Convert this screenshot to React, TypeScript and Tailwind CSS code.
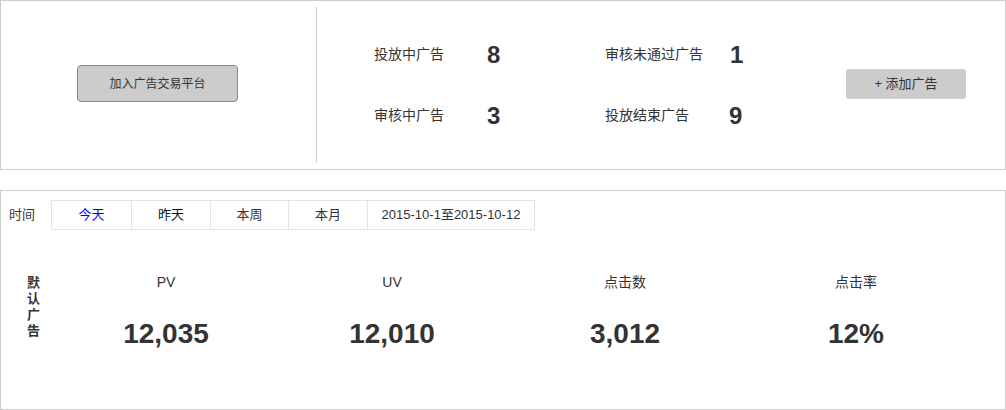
export default function App() {
  const stats = [
    { label: 'PV', value: '12,035', w: 'w-[226px]' },
    { label: 'UV', value: '12,010', w: 'w-[226px]' },
    { label: '点击数', value: '3,012', w: 'w-[240px]' },
    { label: '点击率', value: '12%', w: 'w-[222px]' },
  ];
  const tabs = [
    { t: '今天', w: 'w-[79px]', c: 'text-[#0000ff]' },
    { t: '昨天', w: 'w-[79px]', c: 'text-[#111]' },
    { t: '本周', w: 'w-[78px]', c: 'text-[#333]' },
    { t: '本月', w: 'w-[79px]', c: 'text-[#333]' },
    { t: '2015-10-1至2015-10-12', w: 'w-[167px]', c: 'text-[#333]' },
  ];

  return (
    <div className="w-[1006px] bg-white text-[#333] font-['Liberation_Sans','Noto_Sans_CJK_SC',sans-serif]">
      {/* top summary */}
      <div className="flex h-[170px] border border-[#ccc]">
        <div className="flex w-[315px] items-center justify-center pb-[3px]">
          <button className="mr-[2px] h-[37px] w-[161px] rounded-[4px] border border-[#888] bg-[#ccc] text-[12px] text-[#333]">
            加入广告交易平台
          </button>
        </div>
        <div className="my-[6px] w-px bg-[#ccc]"></div>
        <div className="flex flex-1 items-center pl-[57px]">
          <div className="grid grid-cols-[231px_241px] gap-y-[31px]">
            <div className="flex h-[30px] items-center">
              <span className="w-[113px] text-[14px]">投放中广告</span>
              <span className="text-[24px] font-bold">8</span>
            </div>
            <div className="flex h-[30px] items-center">
              <span className="w-[125px] text-[14px]">审核未通过广告</span>
              <span className="text-[24px] font-bold">1</span>
            </div>
            <div className="flex h-[30px] items-center">
              <span className="w-[113px] text-[14px]">审核中广告</span>
              <span className="text-[24px] font-bold">3</span>
            </div>
            <div className="flex h-[30px] items-center">
              <span className="w-[124px] text-[14px]">投放结束广告</span>
              <span className="text-[24px] font-bold">9</span>
            </div>
          </div>
          <button className="mb-[2px] h-[30px] w-[120px] rounded-[3px] bg-[#ccc] text-[13px] text-[#333]">
            + 添加广告
          </button>
        </div>
      </div>

      {/* bottom data */}
      <div className="mt-[20px] h-[220px] border border-[#ccc]">
        <div className="flex items-center pl-[8px] pt-[9px]">
          <span className="w-[42px] text-[13px]">时间</span>
          <div className="flex h-[30px] border border-[#e1e5ea]">
            {tabs.map((tab, i) => (
              <div
                key={tab.t}
                className={`flex items-center justify-center text-[13px] ${tab.w} ${tab.c} ${i > 0 ? 'border-l border-[#e1e5ea]' : ''}`}
              >
                {tab.t}
              </div>
            ))}
          </div>
        </div>
        <div className="mt-[42px] flex">
          <div className="w-[52px] pl-[26px] pt-[3px] text-[13px] font-bold leading-[16px]">
            <div>默</div>
            <div>认</div>
            <div>广</div>
            <div>告</div>
          </div>
          {stats.map((s) => (
            <div key={s.label} className={`flex flex-col items-center ${s.w}`}>
              <div className="h-[20px] text-[14px] leading-[20px]">{s.label}</div>
              <div className="mt-[26px] text-[28px] font-bold leading-[32px]">{s.value}</div>
            </div>
          ))}
        </div>
      </div>
    </div>
  );
}
